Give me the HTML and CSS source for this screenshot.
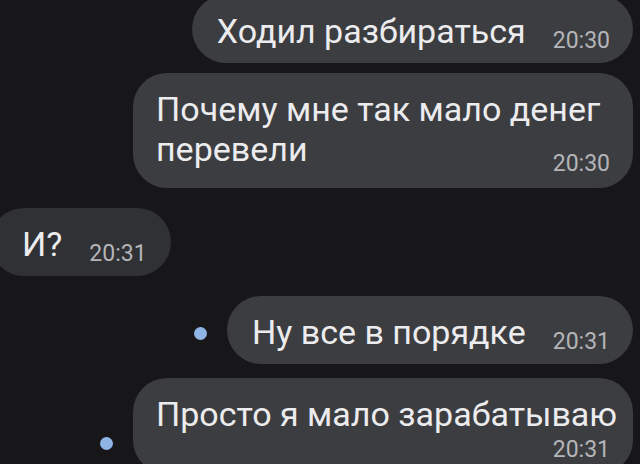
FILE: index.html
```html
<!DOCTYPE html>
<html>

<head>
    <meta charset="UTF-8" />
    <title>Чат</title>
    <link rel="stylesheet" href="styles.css">
</head>
<body>
    <div class="chat">
        <div class="row row-first">
            <div class="bubble">
                <span class="text">Ходил разбираться</span>
                <span class="time">20:30</span>
            </div>
        </div>
        <div class="row row-same">
            <div class="bubble bubble-wide">
                <span class="text">Почему мне так мало денег<br>перевели</span>
                <span class="time time-up">20:30</span>
            </div>
        </div>
        <div class="row row-in">
            <div class="bubble bubble-in">
                <span class="text">И?</span>
                <span class="time">20:31</span>
            </div>
        </div>
        <div class="row row-other">
            <!-- непрочитанное -->
            <span class="dot"></span>
            <div class="bubble">
                <span class="text">Ну все в порядке</span>
                <span class="time">20:31</span>
            </div>
        </div>
        <div class="row row-next">
            <span class="dot"></span>
            <div class="bubble bubble-wide">
                <span class="text nowrap">Просто я мало зарабатываю</span>
                <span class="time time-down">20:31</span>
            </div>
        </div>
    </div>
</body>

</html>
```

FILE: styles.css
```css
*{
    margin: 0;
    padding: 0;
}

body{
    background-color: #171719;
    font-family: Roboto, "Noto Sans", sans-serif;
    overflow: hidden;
}

.chat{
    display: flex;
    flex-direction: column;
    padding-right: 7px;
}

.row{
    display: flex;
    justify-content: flex-end;
    align-items: flex-end;
}

.row-first{
    margin-top: -5px;
}

.row-same{
    margin-top: 10px;
}

.row-in{
    justify-content: flex-start;
    margin-top: 20px;
}

.row-other{
    margin-top: 20px;
}

.row-next{
    margin-top: 14px;
}

.bubble{
    display: flex;
    align-items: flex-end;
    background-color: #3c3d41;
    color: #ececee;
    border-radius: 34px;
    padding: 16px 23px 12px 25px;
}

.bubble-wide{
    width: 500px;
    box-sizing: border-box;
    flex-direction: column;
    align-items: stretch;
    padding-left: 23px;
}

.bubble-in{
    background-color: #2f3134;
    margin-left: -10px;
    padding-left: 32px;
    padding-right: 24px;
}

.text{
    font-size: 34px;
    line-height: 40px;
}

.nowrap{
    white-space: nowrap;
}

.time{
    font-size: 23px;
    line-height: 24px;
    color: #b4b5b9;
    margin-left: 27px;
    /* чуть ниже строки текста */
    margin-bottom: -2px;
}

.bubble-wide .time{
    align-self: flex-end;
    margin-left: 0;
    margin-bottom: 0;
}

.time-up{
    margin-top: -17px;
}

.time-down{
    margin-top: 4px;
}

.dot{
    width: 13px;
    height: 13px;
    border-radius: 50%;
    background-color: #8fb4e6;
    margin: 0 20px 24px 0;
}
```
